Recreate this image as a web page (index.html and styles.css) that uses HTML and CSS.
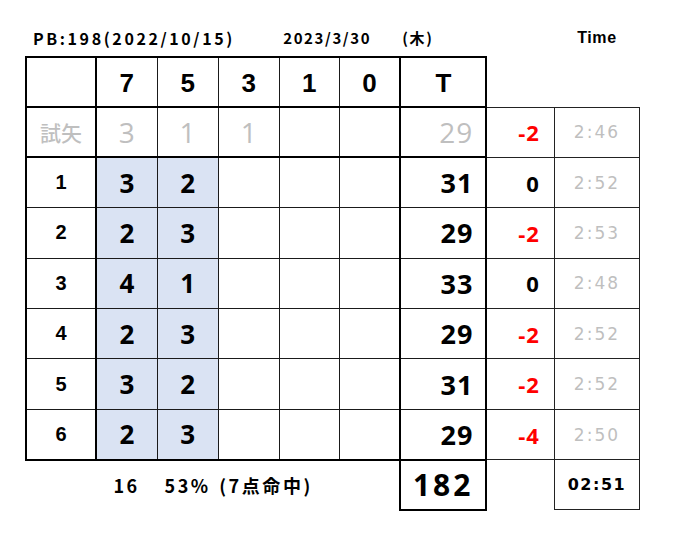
FILE: index.html
```html
<!DOCTYPE html>
<html lang="ja">
<head>
<meta charset="utf-8">
<title>Score</title>
<link rel="stylesheet" href="styles.css">
</head>
<body>
<div class="page">
<table class="sheet">
  <colgroup>
    <col class="c-lbl"><col class="c-n"><col class="c-n"><col class="c-n"><col class="c-n4"><col class="c-n"><col class="c-t"><col class="c-d"><col class="c-tm">
  </colgroup>
  <tr class="title">
    <td colspan="4" class="pb">PB:198(2022/10/15)</td>
    <td colspan="2" class="date">2023/3/30</td>
    <td class="dow">(木)</td>
    <td></td>
    <td class="tlabel">Time</td>
  </tr>
  <tr class="head">
    <td class="m lbl first"></td>
    <td class="m hd">7</td>
    <td class="m hd">5</td>
    <td class="m hd">3</td>
    <td class="m hd">1</td>
    <td class="m hd">0</td>
    <td class="m hd tcol">T</td>
    <td class="blank"></td>
    <td class="blank"></td>
  </tr>
  <tr class="row trial">
    <td class="m lbl first jp">試矢</td>
    <td class="m n">3</td>
    <td class="m n">1</td>
    <td class="m n">1</td>
    <td class="m n"></td>
    <td class="m n"></td>
    <td class="m t tcol">29</td>
    <td class="d neg">-2</td>
    <td class="tm">2:46</td>
  </tr>
  <tr class="row">
    <td class="m lbl first">1</td>
    <td class="m n hi">3</td>
    <td class="m n hi">2</td>
    <td class="m n"></td>
    <td class="m n"></td>
    <td class="m n"></td>
    <td class="m t tcol">31</td>
    <td class="d">0</td>
    <td class="tm">2:52</td>
  </tr>
  <tr class="row">
    <td class="m lbl first">2</td>
    <td class="m n hi">2</td>
    <td class="m n hi">3</td>
    <td class="m n"></td>
    <td class="m n"></td>
    <td class="m n"></td>
    <td class="m t tcol">29</td>
    <td class="d neg">-2</td>
    <td class="tm">2:53</td>
  </tr>
  <tr class="row">
    <td class="m lbl first">3</td>
    <td class="m n hi">4</td>
    <td class="m n hi">1</td>
    <td class="m n"></td>
    <td class="m n"></td>
    <td class="m n"></td>
    <td class="m t tcol">33</td>
    <td class="d">0</td>
    <td class="tm">2:48</td>
  </tr>
  <tr class="row">
    <td class="m lbl first">4</td>
    <td class="m n hi">2</td>
    <td class="m n hi">3</td>
    <td class="m n"></td>
    <td class="m n"></td>
    <td class="m n"></td>
    <td class="m t tcol">29</td>
    <td class="d neg">-2</td>
    <td class="tm">2:52</td>
  </tr>
  <tr class="row">
    <td class="m lbl first">5</td>
    <td class="m n hi">3</td>
    <td class="m n hi">2</td>
    <td class="m n"></td>
    <td class="m n"></td>
    <td class="m n"></td>
    <td class="m t tcol">31</td>
    <td class="d neg">-2</td>
    <td class="tm">2:52</td>
  </tr>
  <tr class="row last">
    <td class="m lbl first">6</td>
    <td class="m n hi">2</td>
    <td class="m n hi">3</td>
    <td class="m n"></td>
    <td class="m n"></td>
    <td class="m n"></td>
    <td class="m t tcol">29</td>
    <td class="d neg">-4</td>
    <td class="tm">2:50</td>
  </tr>
  <tr class="sum">
    <td></td>
    <td class="s-c">16</td>
    <td class="s-c">53%</td>
    <td colspan="3" class="s-l">(7点命中)</td>
    <td class="total">182</td>
    <td></td>
    <td class="avg">02:51</td>
  </tr>
</table>
</div>
</body>
</html>
```

FILE: styles.css
```css
html, body {
  margin: 0;
  padding: 0;
  background: #ffffff;
}

.page {
  padding: 19px 0 0 25px;
}

.sheet {
  border-collapse: collapse;
  table-layout: fixed;
  width: 615px;
  font-family: "Noto Sans CJK JP", "Noto Sans", sans-serif;
  color: #000;
}

.c-lbl { width: 70px; }
.c-n { width: 61px; }
.c-n4 { width: 60px; }
.c-t { width: 86px; }
.c-d { width: 68px; }
.c-tm { width: 85px; }

.sheet td {
  padding: 0;
  vertical-align: middle;
  white-space: nowrap;
  overflow: visible;
}

/* title row */
.title {
  height: 38px;
}
.title td {
  font-weight: 700;
  font-size: 15px;
  letter-spacing: 1.6px;
  line-height: 1;
}
.title td.pb {
  padding-left: 7px;
  font-size: 16px;
  letter-spacing: 2.6px;
}
.title td.date { padding-left: 4px; }
.title td.dow { padding-left: 2px; }
.title td.tlabel {
  text-align: center;
  font-size: 16px;
  letter-spacing: 0.6px;
  font-family: "Liberation Sans", Arial, sans-serif;
}

/* main grid */
.head { height: 50px; }
.row { height: 50.4px; }
.sum { height: 50px; }

.m {
  border: 1px solid #1a1a1a;
}
.head .m {
  border-top: 2px solid #000;
  border-bottom: 2px solid #000;
}
.trial .m {
  border-bottom: 2px solid #000;
}
.last .m {
  border-bottom: 2px solid #000;
}
.sheet td.first,
.sheet td.tcol {
  border-left: 2px solid #000;
  border-right: 2px solid #000;
}

.sheet td.hd {
  text-align: center;
  font-family: "Liberation Sans", Arial, sans-serif;
  font-weight: 700;
  font-size: 26px;
  padding-top: 2px;
}

.lbl {
  text-align: center;
  font-family: "Liberation Sans", Arial, sans-serif;
  font-weight: 700;
  font-size: 20px;
}
.lbl.jp {
  font-family: "Noto Sans CJK JP", sans-serif;
  font-size: 21px;
  font-weight: 500;
  letter-spacing: 0;
}

.n {
  text-align: center;
  font-family: "Open Sans", sans-serif;
  font-weight: 700;
  font-size: 26px;
}
.hi {
  background: #dae3f3;
}

.sheet td.t {
  text-align: right;
  padding-right: 12px;
  font-family: "Open Sans", sans-serif;
  font-weight: 700;
  font-size: 27px;
  letter-spacing: 1px;
}

.trial td {
  color: #bfbfbf;
}
.trial .n,
.sheet .trial td.t {
  font-weight: 400;
  font-size: 28px;
}
.trial .d.neg {
  color: #ff0000;
}

/* diff and time columns */
.sheet td.d {
  border: 1px solid #222;
  text-align: right;
  padding-right: 14px;
  font-family: "Open Sans", sans-serif;
  font-weight: 700;
  font-size: 22px;
  letter-spacing: 1px;
}
.neg {
  color: #ff0000;
}
.tm {
  border: 1px solid #222;
  text-align: center;
  color: #bfbfbf;
  font-family: "DejaVu Sans", sans-serif;
  font-size: 17px;
  letter-spacing: 2px;
}

/* summary row */
.s-c {
  text-align: center;
  font-weight: 700;
  font-size: 18px;
  letter-spacing: 2.5px;
}
.sheet td.s-l {
  text-align: left;
  padding-left: 1px;
  font-weight: 700;
  font-size: 18px;
  letter-spacing: 2.6px;
}
.sheet td.total {
  border: 2px solid #000;
  text-align: right;
  padding-right: 12px;
  font-family: "Open Sans", sans-serif;
  font-weight: 700;
  font-size: 30px;
  letter-spacing: 3px;
}
.avg {
  border: 1px solid #222;
  text-align: center;
  font-family: "DejaVu Sans", sans-serif;
  font-weight: 700;
  font-size: 16px;
  letter-spacing: 1.5px;
}
```
